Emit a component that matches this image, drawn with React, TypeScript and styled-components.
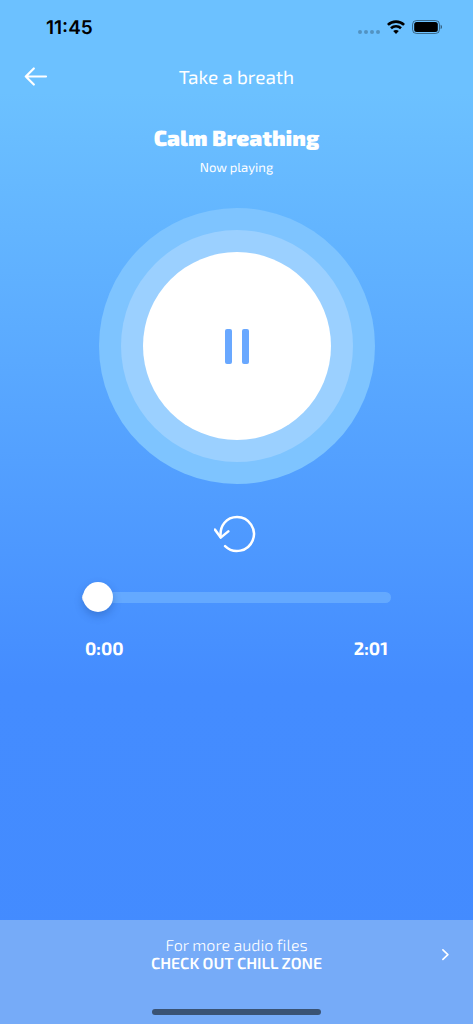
import React, { useState } from 'react';
import styled, { createGlobalStyle } from 'styled-components';

const GlobalStyle = createGlobalStyle`
  *, *::before, *::after { box-sizing: border-box; }
  body {
    margin: 0;
    color: #fff;
    font-family: "Exo 2", "Open Sans", "Noto Sans", sans-serif;
    font-variant-ligatures: none;
    text-rendering: geometricPrecision;
  }
  button { font: inherit; color: inherit; }
`;

const Screen = styled.div`
  display: flex;
  flex-direction: column;
  min-height: 100vh;
  background: linear-gradient(180deg, #6cc1ff 0%, #6cc1ff 9%, #448cff 67%, #438bff 100%);
`;

const StatusBar = styled.div`
  display: flex;
  align-items: center;
  justify-content: space-between;
  height: 54px;
  padding: 0 31px 0 46px;
  color: #000;
`;

const Clock = styled.time`
  padding-top: 2px;
  font: 600 19px/24px Inter, sans-serif;
`;

const StatusIcons = styled.div`
  display: flex;
  align-items: center;
  gap: 7px;
`;

const Header = styled.header`
  display: grid;
  grid-template-columns: 48px 1fr 48px;
  align-items: center;
  height: 46px;
  padding: 0 12px;
`;

const IconButton = styled.button`
  display: flex;
  align-items: center;
  justify-content: center;
  height: 44px;
  padding: 0;
  border: 0;
  background: none;
  cursor: pointer;
`;

const PageTitle = styled.h1`
  margin: 0;
  font-size: 19px;
  font-weight: 400;
  line-height: 24px;
  text-align: center;
`;

const Player = styled.main`
  display: flex;
  flex: 1;
  flex-direction: column;
  align-items: center;
  padding: 22px 82px 24px;
`;

const TrackTitle = styled.h2`
  margin: 0;
  font-size: 22px;
  font-weight: 900;
  line-height: 32px;
  white-space: nowrap;
`;

const TrackStatus = styled.p`
  margin: 3px 0 31px;
  font-size: 13px;
  line-height: 20px;
`;

const Ring = styled.div<{ $color: string }>`
  padding: 22px;
  border-radius: 50%;
  background: ${({ $color }) => $color};
`;

const PlayButton = styled.button`
  display: flex;
  align-items: center;
  justify-content: center;
  width: 188px;
  height: 188px;
  padding: 0;
  border: 0;
  border-radius: 50%;
  background: #fff;
  cursor: pointer;
`;

const RestartButton = styled(IconButton)`
  width: 48px;
  margin: 28px 0 26px;
`;

const Seek = styled.input`
  appearance: none;
  width: 100%;
  height: 30px;
  margin: 0;
  background: none;
  cursor: pointer;

  &::-webkit-slider-runnable-track {
    height: 11px;
    padding-left: 1px;
    border-radius: 6px;
    background: linear-gradient(90deg, #fff 12px, #64a9ff 12px);
  }

  &::-webkit-slider-thumb {
    appearance: none;
    width: 30px;
    height: 30px;
    margin-top: -10px;
    border-radius: 50%;
    background: #fff;
    box-shadow: 0 4px 8px rgba(20, 60, 130, 0.3);
  }
`;

const Times = styled.div`
  display: flex;
  justify-content: space-between;
  width: 100%;
  margin-top: 24px;
  padding: 0 3px;
  font-size: 18px;
  font-weight: 700;
  line-height: 24px;
`;

const Footer = styled.footer`
  display: flex;
  flex-direction: column;
  align-items: center;
  justify-content: space-between;
  height: 104px;
  padding: 17px 12px 9px;
  background: #76abf8;
`;

const PromoLink = styled.a`
  display: grid;
  grid-template-columns: 32px 1fr 32px;
  align-items: center;
  justify-items: center;
  width: 100%;
  color: #fff;
  font-size: 16px;
  font-weight: 300;
  line-height: 18px;
  text-align: center;
  text-decoration: none;
`;

const PromoText = styled.span`
  display: flex;
  flex-direction: column;
  grid-column: 2;
`;

const PromoAction = styled.strong`
  font-weight: 600;
`;

const HomeIndicator = styled.div`
  width: 169px;
  height: 6px;
  border-radius: 3px;
  background: #3a5374;
`;

const formatTime = (seconds: number) =>
  `${Math.floor(seconds / 60)}:${String(seconds % 60).padStart(2, '0')}`;

const DURATION = 121;

const SignalIcon = () => (
  <svg width="22" height="18" viewBox="0 0 22 18" fill="#000" fillOpacity="0.24" aria-hidden="true">
    <circle cx="2" cy="14" r="2" />
    <circle cx="8" cy="14" r="2" />
    <circle cx="14" cy="14" r="2" />
    <circle cx="20" cy="14" r="2" />
  </svg>
);

const WifiIcon = () => (
  <svg width="18" height="14" viewBox="0 0 18 14" fill="none" stroke="#000" aria-hidden="true">
    <path d="M.9 4.9a11.6 11.6 0 0 1 16.2 0" strokeWidth="2.6" />
    <path d="M4 8.3a7.2 7.2 0 0 1 10 0" strokeWidth="2.6" />
    <path d="M9 14 6.2 11.1a3.9 3.9 0 0 1 5.6 0Z" fill="#000" stroke="none" />
  </svg>
);

const BatteryIcon = () => (
  <svg width="30" height="14" viewBox="0 0 30 14" aria-hidden="true">
    <rect x=".5" y=".5" width="27" height="13" rx="4" fill="none" stroke="#000" strokeOpacity=".45" />
    <rect x="2.2" y="2" width="23.6" height="10" rx="2.5" />
    <path d="M28.6 4.8c1 .4 1.4 1.2 1.4 2.2s-.4 1.8-1.4 2.2Z" fillOpacity=".5" />
  </svg>
);

const BackIcon = () => (
  <svg width="24" height="20" viewBox="0 0 24 20" fill="none" stroke="#fff" strokeWidth="2.2" strokeLinecap="round" strokeLinejoin="round" aria-hidden="true">
    <path d="M22 9.5H1.8M9.8 1.5l-8 8 8 8" />
  </svg>
);

const PauseIcon = () => (
  <svg width="24" height="35" viewBox="0 0 24 35" fill="#69a8ff" aria-hidden="true">
    <rect width="7" height="35" rx="2" />
    <rect x="17" width="7" height="35" rx="2" />
  </svg>
);

const PlayIcon = () => (
  <svg width="32" height="36" viewBox="0 0 32 36" fill="#69a8ff" aria-hidden="true">
    <path d="M3 2v32l27-16Z" />
  </svg>
);

const RestartIcon = () => (
  <svg width="46" height="38" viewBox="0 0 46 38" fill="none" stroke="#fff" strokeWidth="2.5" strokeLinecap="round" strokeLinejoin="round" aria-hidden="true">
    <path d="M6.7 22.2C5.3 10.5 12.7 2 23.1 2a17 17 0 1 1-12 29.2" />
    <path d="m.9 14.6 5.8 8 7.6-6.2" />
  </svg>
);

const ChevronIcon = () => (
  <svg width="8" height="12" viewBox="0 0 8 12" fill="none" stroke="#fff" strokeWidth="1.6" strokeLinecap="round" strokeLinejoin="round" aria-hidden="true">
    <path d="m1.9 .8 5 4.8-5 4.8" />
  </svg>
);

export default function App() {
  const [playing, setPlaying] = useState(true);
  const [position, setPosition] = useState(0);

  return (
    <>
      <GlobalStyle />
      <Screen>
        <StatusBar>
          <Clock>11:45</Clock>
          <StatusIcons>
            <SignalIcon />
            <WifiIcon />
            <BatteryIcon />
          </StatusIcons>
        </StatusBar>
        <Header>
          <IconButton type="button" aria-label="Back">
            <BackIcon />
          </IconButton>
          <PageTitle>Take a breath</PageTitle>
        </Header>
        <Player>
          <TrackTitle>Calm Breathing</TrackTitle>
          <TrackStatus>Now playing</TrackStatus>
          <Ring $color="#7ec4ff">
            <Ring $color="#9bd0ff">
              <PlayButton type="button" aria-label={playing ? 'Pause' : 'Play'} onClick={() => setPlaying(!playing)}>
                {playing ? <PauseIcon /> : <PlayIcon />}
              </PlayButton>
            </Ring>
          </Ring>
          <RestartButton type="button" aria-label="Restart" onClick={() => setPosition(0)}>
            <RestartIcon />
          </RestartButton>
          <Seek
            type="range"
            aria-label="Playback position"
            min={0}
            max={DURATION}
            value={position}
            onChange={(event) => setPosition(Number(event.target.value))}
          />
          <Times>
            <span>{formatTime(position)}</span>
            <span>{formatTime(DURATION)}</span>
          </Times>
        </Player>
        <Footer>
          <PromoLink href="#chill-zone">
            <PromoText>
              <span>For more audio files</span>
              <PromoAction>CHECK OUT CHILL ZONE</PromoAction>
            </PromoText>
            <ChevronIcon />
          </PromoLink>
          <HomeIndicator />
        </Footer>
      </Screen>
    </>
  );
}
